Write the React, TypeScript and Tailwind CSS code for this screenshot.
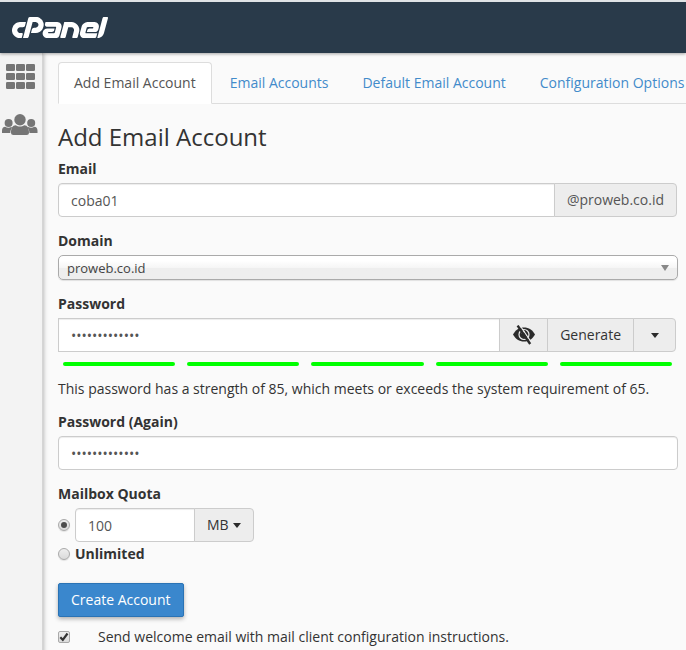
import type { ReactNode } from "react";
import { SiCpanel } from "react-icons/si";

const tabs = ["Add Email Account", "Email Accounts", "Default Email Account", "Configuration Options"];

const fieldClass =
  "h-[34px] min-w-0 border border-[#ccc] bg-white px-3 text-sm text-[#555] shadow-[inset_0_1px_1px_rgba(0,0,0,0.075)] outline-none";

const radioClass =
  "flex size-3 shrink-0 appearance-none items-center justify-center rounded-full border border-[#a9a9a9] bg-linear-to-b from-[#eee] to-[#dadada] shadow-[0_1px_1px_rgba(0,0,0,0.1)] checked:before:size-1.5 checked:before:rounded-full checked:before:bg-[#4d4d4d] checked:before:content-['']";

function GridIcon() {
  return (
    <svg width="29" height="25" viewBox="0 0 29 25" fill="#757575" aria-hidden="true">
      {[0, 9, 18].map((y) =>
        [0, 10, 20].map((x) => <rect key={`${x}-${y}`} x={x} y={y} width="9" height="7" rx="1.3" />)
      )}
    </svg>
  );
}

function UsersIcon() {
  return (
    <svg width="36" height="21" viewBox="0 0 36 21" fill="#757575" aria-hidden="true">
      <circle cx="6.6" cy="9" r="4" />
      <circle cx="29.2" cy="9" r="4" />
      <path d="M0 19v-2.2c0-2.5 1.3-4 3.2-4 1 .7 2 1 3.3 1 1 0 1.9-.3 2.7-.7l1 .6C8.8 15 8.3 16.8 8.3 19z" />
      <path d="M35.5 19v-2.2c0-2.5-1.3-4-3.2-4-1 .7-2 1-3.2 1-1 0-1.9-.3-2.7-.7l-1 .6c1.5 1.3 2 3.1 2 5.3z" />
      <circle cx="18" cy="5.7" r="5.7" />
      <path d="M9 18.5c0-4 1.4-7.2 4.7-7.2 1.3.9 2.7 1.3 4.3 1.3s3-.4 4.300-1.3c3.3 0 4.7 3.2 4.7 7.2 0 1.7-.9 2.5-2.4 2.5H11.4C9.900 21 9 20.2 9 18.5z" />
    </svg>
  );
}

function HiddenEyeIcon() {
  return (
    <svg width="22" height="20" viewBox="0 0 22 20" fill="none" aria-hidden="true">
      <path d="M0 9.500C2.500 5 6.200 2.500 11 2.500s8.500 2.500 11 7c-2.500 4.500-6.200 7-11 7s-8.500-2.500-11-7z" fill="#2b2b2b" />
      <circle cx="11" cy="9.500" r="5" stroke="#ededed" strokeWidth="1.200" />
      <path d="M9.200 8.700c.1-1.500 1-2.300 2.400-2.300" stroke="#ededed" strokeWidth="1.200" />
      <path d="M6.600 0L19.200 18.600" stroke="#ededed" strokeWidth="1.200" />
      <path d="M4.600.6L17.200 19" stroke="#2b2b2b" strokeWidth="2.400" />
    </svg>
  );
}

function Caret() {
  return (
    <svg width="8" height="5" viewBox="0 0 8 5" fill="#2b2b2b" aria-hidden="true">
      <path d="M0 0h8L4 5z" />
    </svg>
  );
}

function Label({ htmlFor, children }: { htmlFor: string; children: ReactNode }) {
  return (
    <label htmlFor={htmlFor} className="mb-1 block font-bold">
      {children}
    </label>
  );
}

export default function App() {
  return (
    <div className="flex min-h-screen flex-col overflow-hidden bg-[#fafafa] font-['Open_Sans','Noto_Sans',sans-serif] text-sm leading-5 text-[#333]">
      <header className="relative z-10 flex h-[53px] shrink-0 items-center border-t-2 border-[#dfe3e6] bg-[#293a4a] px-3 shadow-[0_1px_3px_rgba(0,0,0,0.35)]">
        <a href="#" aria-label="cPanel" className="text-white">
          <SiCpanel viewBox="0 9.4 24 5.2" className="h-[21px] w-24" />
        </a>
      </header>

      <div className="flex flex-1">
        <nav className="flex w-[43px] shrink-0 flex-col items-center gap-[25px] border-r border-[#d5d5d5] bg-[#f3f3f3] pt-[11px] pr-0.5 shadow-[1px_0_4px_rgba(0,0,0,0.25)]">
          <a href="#" aria-label="Home"><GridIcon /></a>
          <a href="#" aria-label="User manager"><UsersIcon /></a>
        </nav>

        <main className="min-w-0 flex-1 pt-[9px] pl-[15px]">
          <ul className="flex border-b border-[#ddd] whitespace-nowrap">
            {tabs.map((tab, i) => (
              <li key={tab} className="-mb-px mr-0.5">
                <a
                  href="#"
                  className={
                    i === 0
                      ? "block rounded-t border border-[#ddd] border-b-white bg-white px-[15px] py-2.5 text-[#555]"
                      : "block border border-transparent px-[15px] py-2.5 text-[#428bca]"
                  }
                >
                  {tab}
                </a>
              </li>
            ))}
          </ul>

          <form className="pr-2 pb-2" onSubmit={(e) => e.preventDefault()}>
            <h1 className="mt-[19px] mb-2 text-2xl leading-7">Add Email Account</h1>

            <Label htmlFor="email">Email</Label>
            <div className="mr-px mb-3.5 flex">
              <input id="email" type="text" defaultValue="coba01" className={`${fieldClass} flex-1 rounded-l`} />
              <span className="-ml-px flex items-center rounded-r border border-[#ccc] bg-[#ededed] px-3 text-[#555]">
                @proweb.co.id
              </span>
            </div>

            <Label htmlFor="domain">Domain</Label>
            <div className="relative mb-3.5">
              <select
                id="domain"
                className="block h-[25px] w-full appearance-none rounded-[5px] border border-[#aaa] bg-linear-to-b from-white from-20% via-[#f6f6f6] via-50% to-[#eee] to-52% px-2 text-[13px] text-[#444] shadow-[0_1px_1px_rgba(0,0,0,0.1)] outline-none"
              >
                <option>proweb.co.id</option>
              </select>
              <svg width="8" height="6" viewBox="0 0 8 6" fill="#888" className="pointer-events-none absolute top-2.5 right-[9px]" aria-hidden="true">
                <path d="M0 0h8L4 6z" />
              </svg>
            </div>

            <Label htmlFor="password">Password</Label>
            <div className="mr-0.5 flex">
              <input id="password" type="password" defaultValue="Xk9mPq2rTv7wZ" className={`${fieldClass} flex-1`} />
              <button type="button" aria-label="Show password" className="-ml-px flex w-[49px] items-center justify-center border border-[#ccc] bg-[#ededed]">
                <HiddenEyeIcon />
              </button>
              <button type="button" className="-ml-px border border-[#ccc] bg-[#ededed] px-3">
                Generate
              </button>
              <button type="button" aria-label="Generator options" className="-ml-px flex w-[43px] items-center justify-center rounded-r-sm border border-[#ccc] bg-[#ededed]">
                <Caret />
              </button>
            </div>
            <div className="mt-2.5 mr-1.5 mb-[13px] ml-[5px] flex gap-3" role="presentation">
              {[1, 2, 3, 4, 5].map((n) => (
                <span key={n} className="h-1 flex-1 rounded-full bg-[#00ff00]" />
              ))}
            </div>
            <p className="mb-[13px]">
              This password has a strength of 85, which meets or exceeds the system requirement of 65.
            </p>

            <Label htmlFor="password-again">Password (Again)</Label>
            <input id="password-again" type="password" defaultValue="Xk9mPq2rTv7wZ" className={`${fieldClass} mb-3.5 block w-full rounded`} />

            <fieldset>
              <legend className="mb-1 font-bold">Mailbox Quota</legend>
              <div className="flex items-center gap-[5px]">
                <input type="radio" name="quota" defaultChecked aria-label="Limited quota" className={radioClass} />
                <div className="flex">
                  <input type="text" aria-label="Quota size" defaultValue="100" className={`${fieldClass} w-[120px] rounded-l`} />
                  <button type="button" className="-ml-px flex items-center gap-1 rounded-r-sm border border-[#ccc] bg-[#ededed] px-3">
                    MB
                    <Caret />
                  </button>
                </div>
              </div>
              <label className="mt-0.5 flex items-center gap-[5px] font-bold">
                <input type="radio" name="quota" className={radioClass} />
                Unlimited
              </label>
            </fieldset>

            <button
              type="submit"
              className="mt-[19px] block h-[34px] rounded-xs border border-[#2a73b5] bg-[#3a87cd] px-3 text-white shadow-[0_2px_4px_rgba(0,0,0,0.3)]"
            >
              Create Account
            </button>

            <label className="mt-2.5 flex items-center gap-7">
              <span className="relative flex">
                <input type="checkbox" defaultChecked className="peer size-3 appearance-none rounded-xs border border-[#a9a9a9] bg-linear-to-b from-[#eee] to-[#dcdcdc]" />
                <svg width="12" height="12" viewBox="0 0 12 12" fill="none" stroke="#333" strokeWidth="2.2" className="pointer-events-none absolute inset-0 hidden peer-checked:block" aria-hidden="true">
                  <path d="M2.3 6.3l2.5 2.5L9.5 2.5" />
                </svg>
              </span>
              Send welcome email with mail client configuration instructions.
            </label>
          </form>
        </main>
      </div>
    </div>
  );
}
